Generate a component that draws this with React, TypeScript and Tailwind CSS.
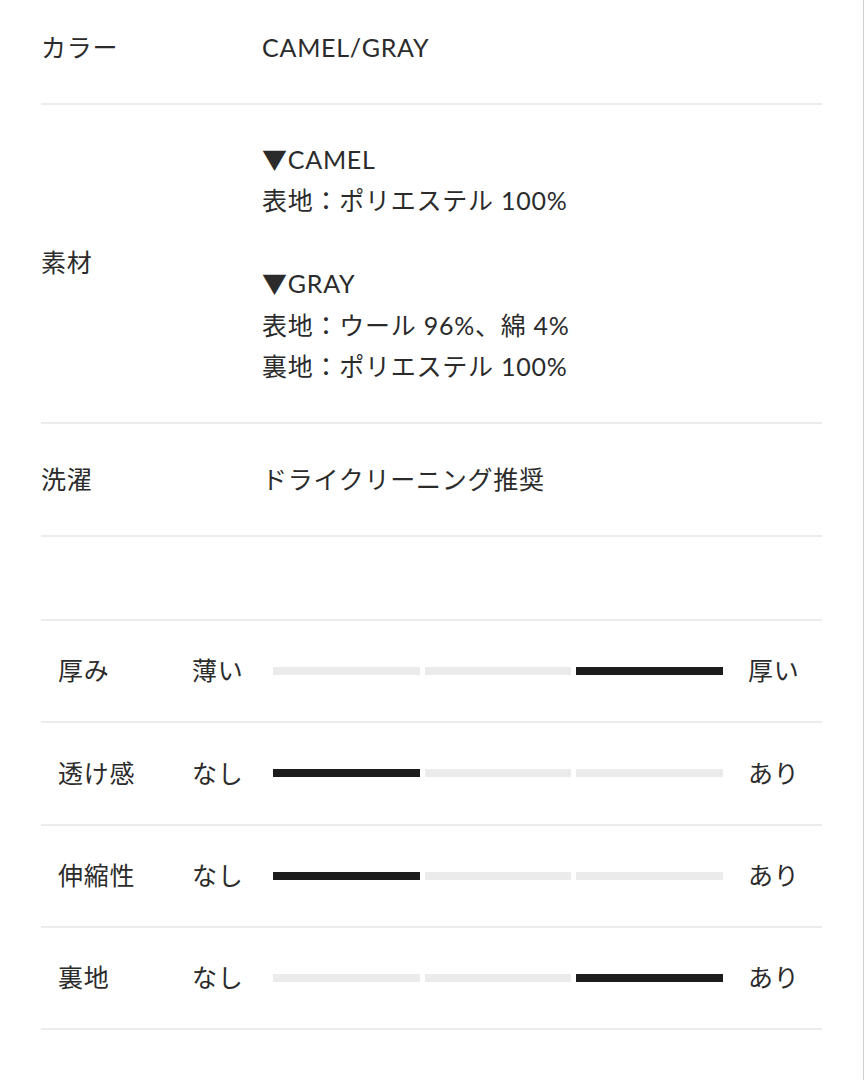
import React from "react";

const font = {
  fontFamily: 'Lato, "Noto Sans CJK JP", sans-serif',
};

type Spec = { label: string; min: string; max: string; level: number };

const specs: Spec[] = [
  { label: "厚み", min: "薄い", max: "厚い", level: 2 },
  { label: "透け感", min: "なし", max: "あり", level: 0 },
  { label: "伸縮性", min: "なし", max: "あり", level: 0 },
  { label: "裏地", min: "なし", max: "あり", level: 2 },
];

function InfoRow({
  label,
  children,
  className = "py-[35px]",
}: {
  label: string;
  children: React.ReactNode;
  className?: string;
}) {
  return (
    <div
      className={`flex items-center border-b-2 border-[#ececec] ${className}`}
    >
      <div className="w-[221px] shrink-0">{label}</div>
      <div>{children}</div>
    </div>
  );
}

function SpecRow({ spec }: { spec: Spec }) {
  return (
    <div className="flex items-center h-[102.3px] border-b-2 border-[#ececec] pl-[17px]">
      <div className="w-[134px] shrink-0">{spec.label}</div>
      <div className="w-[81px] shrink-0">{spec.min}</div>
      {/* 3段階のバー */}
      <div className="flex gap-[5px] w-[450px] shrink-0">
        {[0, 1, 2].map((i) => (
          <div
            key={i}
            className={`flex-1 h-[8px] ${
              i === spec.level ? "bg-[#1c1c1c]" : "bg-[#ebebeb]"
            }`}
          />
        ))}
      </div>
      <div className="ml-[25px]">{spec.max}</div>
    </div>
  );
}

export default function App() {
  return (
    <div
      className="min-h-screen bg-white border-r border-[#cfcfcf] text-[#2b2b2b] text-[25px] leading-[41.5px] tracking-[0.03em]"
      style={font}
    >
      <div className="mx-[41px] w-[781px]">
        <InfoRow label="カラー" className="pt-[27px] pb-[34px]">
          CAMEL/GRAY
        </InfoRow>

        <InfoRow label="素材" className="pt-[34px] pb-[34px]">
          <p>▼CAMEL</p>
          <p>表地：ポリエステル 100%</p>
          <p>&nbsp;</p>
          <p>▼GRAY</p>
          <p>表地：ウール 96%、綿 4%</p>
          <p>裏地：ポリエステル 100%</p>
        </InfoRow>

        <InfoRow label="洗濯">ドライクリーニング推奨</InfoRow>

        <div className="mt-[82px] border-t-2 border-[#ececec]">
          {specs.map((s) => (
            <SpecRow key={s.label} spec={s} />
          ))}
        </div>
      </div>
    </div>
  );
}
